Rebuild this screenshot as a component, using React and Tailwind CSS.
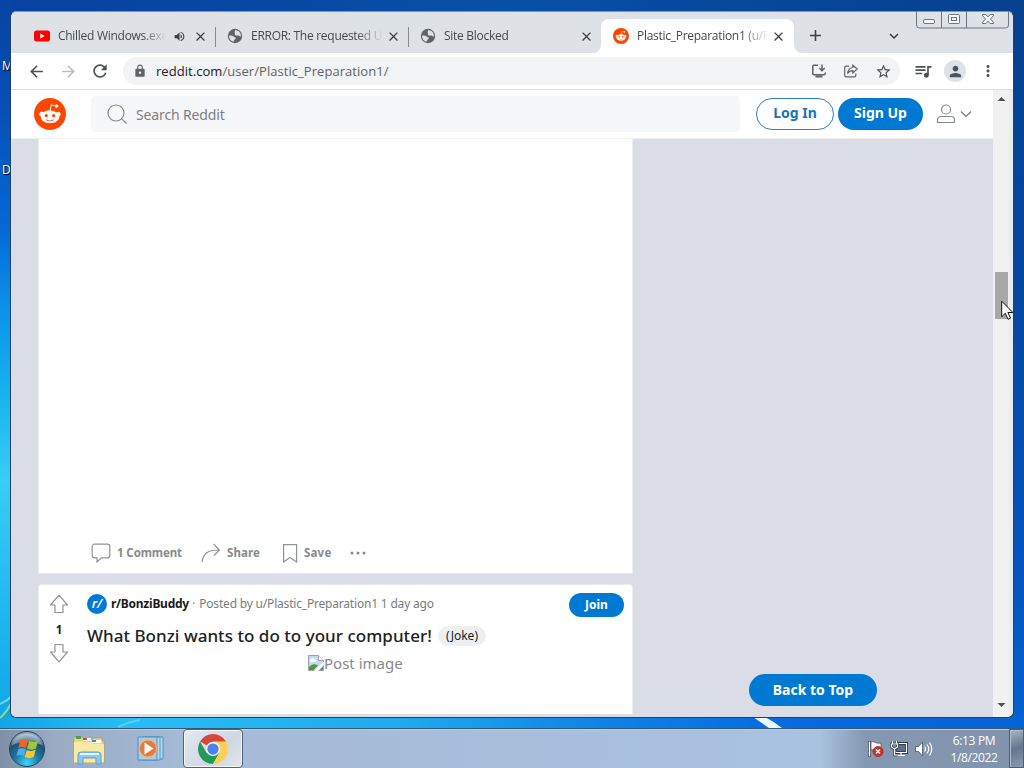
import React from 'react';
import {
  MdAdd,
  MdArrowBack,
  MdArrowForward,
  MdClose,
  MdExpandMore,
  MdLock,
  MdMoreVert,
  MdPerson,
  MdQueueMusic,
  MdRefresh,
  MdStarBorder,
  MdVolumeUp,
} from 'react-icons/md';

const tabs = [
  { title: 'Chilled Windows.exe', icon: 'youtube', audio: true, divider: true },
  { title: 'ERROR: The requested U', icon: 'globe', divider: true },
  { title: 'Site Blocked', icon: 'globe' },
  { title: 'Plastic_Preparation1 (u/P', icon: 'reddit', active: true },
];

function Snoo({ size }) {
  return (
    <svg width={size} height={size} viewBox="0 0 20 20" className="shrink-0">
      <circle cx="10" cy="10" r="10" fill="#ff4500" />
      <path
        fill="#fff"
        d="M16.67 10a1.46 1.46 0 0 0-2.47-1 7.12 7.12 0 0 0-3.85-1.23l.65-3.12 2.14.45a1 1 0 1 0 .13-.61l-2.45-.49a.31.31 0 0 0-.37.24l-.74 3.47a7.14 7.14 0 0 0-3.9 1.23 1.46 1.46 0 1 0-1.61 2.39 2.87 2.87 0 0 0 0 .44c0 2.24 2.61 4.06 5.83 4.06s5.83-1.82 5.83-4.06a2.87 2.87 0 0 0 0-.44 1.46 1.46 0 0 0 .81-1.33zm-10 1a1 1 0 1 1 2 0 1 1 0 0 1-2 0zm5.81 2.75a3.84 3.84 0 0 1-2.47.77 3.84 3.84 0 0 1-2.47-.77.27.27 0 0 1 .38-.38 3.27 3.27 0 0 0 2.09.63 3.28 3.28 0 0 0 2.09-.61.27.27 0 1 1 .39.4zm-.18-1.71a1 1 0 1 1 0-2 1 1 0 0 1 0 2z"
      />
    </svg>
  );
}

function TabIcon({ name }) {
  if (name === 'reddit') return <Snoo size={16} />;
  if (name === 'globe') {
    return (
      <svg width="16" height="16" viewBox="0 0 16 16" className="shrink-0">
        <circle cx="8" cy="8" r="7.200" fill="#5f6368" />
        <path d="M2 7.600c1.800-.3 4 .2 4.900 1.200.7.800 1.900.3 2 1.300 0 1-1.300 1-1.500 2-.1.700-.6 1.400-1.200 1.600C3.400 13 1.900 10.500 2 7.600z" fill="#dee1e6" />
        <path d="M8.500 1.900c2.500.2 4.500 1.900 5.200 4.100.2.900.2 2-.1 2.900-.8-.2-1-1.300-2-1.400-1.300-.2-2.700.4-3.500-.6-.6-.9.200-1.700-.4-2.400-.5-.7.300-1.600.8-2.600z" fill="#dee1e6" />
      </svg>
    );
  }
  return (
    <svg width="16" height="16" viewBox="0 0 16 16" className="shrink-0">
      <rect y="2.4" width="16" height="11" rx="2.500" fill="#f00" />
      <path d="M6.300 5.400v5l4.400-2.500z" fill="#fff" />
    </svg>
  );
}

function Tab({ tab }) {
  return (
    <div
      className={`relative flex h-[34px] w-[193px] shrink-0 items-center pl-3 ${
        tab.active ? 'rounded-t-lg bg-white pr-[8px]' : 'pr-[7px]'
      }`}
    >
      <TabIcon name={tab.icon} />
      <div className="ml-[8px] flex-1 overflow-hidden whitespace-nowrap text-[12px] tracking-[-0.28px] text-[#45494d] [mask-image:linear-gradient(to_right,#000_78%,transparent_98%)]">
        {tab.title}
      </div>
      {tab.audio && <MdVolumeUp size={13} className="ml-[5px] mr-[7px] shrink-0 text-[#3c4043]" />}
      <MdClose size={15} className="shrink-0 text-[#3c4043]" />
      {tab.divider && <span className="absolute -right-px top-[8px] h-[20px] w-px bg-[#85888d]" />}
      {tab.active && (
        <>
          <svg className="absolute -left-2 bottom-0" width="8" height="8">
            <path d="M8 0v8H0a8 8 0 0 0 8-8z" fill="#fff" />
          </svg>
          <svg className="absolute -right-2 bottom-0" width="8" height="8">
            <path d="M0 0v8h8a8 8 0 0 1-8-8z" fill="#fff" />
          </svg>
        </>
      )}
    </div>
  );
}

function WindowControls() {
  return (
    <svg
      className="absolute -top-px right-[3px]"
      width="94"
      height="18"
      fill="none"
      stroke="#6f757c"
    >
      <path d="M.5 0v14a3 3 0 0 0 3 3h86a3 3 0 0 0 3-3V0M25.500 0v17M50.500 0v17" />
      <rect x="7.500" y="8.500" width="11" height="4" rx="1.500" fill="#f6f7f8" />
      <rect x="32.500" y="3.500" width="11" height="9" rx="1" fill="#f6f7f8" />
      <rect x="35.500" y="6.500" width="5" height="3" />
      <path
        d="M66.500 3.500h3.500l2 2.500 2-2.500h3.500v1L74.500 8l3 3.500v1H74l-2-2.500-2 2.500h-3.500v-1l3-3.500-3-3.500z"
        fill="#f6f7f8"
      />
    </svg>
  );
}

function TabStrip() {
  return (
    <div className="flex h-[41px] items-end rounded-t-md bg-[#dee1e6] pl-[11px]">
      {tabs.map((tab) => (
        <Tab key={tab.title} tab={tab} />
      ))}
      <MdAdd size={19} className="mb-[8px] ml-[12px] text-[#3c4043]" />
      <MdExpandMore size={18} className="mb-[8px] ml-[60px] text-[#3c4043]" />
      <WindowControls />
    </div>
  );
}

function InstallIcon() {
  return (
    <svg width="16" height="16" viewBox="0 0 16 16" fill="none" stroke="#5f6368" strokeWidth="1.500">
      <path d="M7 2.200H2.800a1 1 0 0 0-1 1v7.600a1 1 0 0 0 1 1h10.400a1 1 0 0 0 1-1V9.500M11 1.500v6M8.300 5l2.700 2.700L13.700 5" />
      <path d="M4.500 13.500h7" strokeWidth="2" />
    </svg>
  );
}

function ShareOutIcon() {
  return (
    <svg width="16" height="16" viewBox="0 0 16 16" fill="none" stroke="#5f6368" strokeWidth="1.200">
      <path d="M6 3.200H3a1.300 1.300 0 0 0-1.300 1.300v8A1.300 1.300 0 0 0 3 13.800h8.500a1.300 1.300 0 0 0 1.300-1.300v-2" />
      <path d="M9.800 2.200 14.300 6l-4.500 3.900V7.700C7.500 7.700 5.800 8.500 4.500 10.500c.4-3.300 2.300-5.600 5.300-6z" />
    </svg>
  );
}

function Toolbar() {
  return (
    <div className="flex h-[37px] items-center border-b border-[#dadce0] bg-white pl-[16px] pr-[14px]">
      <MdArrowBack size={19} className="text-[#4c4f53]" />
      <MdArrowForward size={19} className="ml-[13px] text-[#b9bbbe]" />
      <MdRefresh size={20} className="ml-[12px] text-[#4c4f53]" />
      <div className="ml-[13px] flex h-[28px] w-[777px] items-center rounded-full bg-[#f1f3f4] pl-[10px] pr-[8px]">
        <MdLock size={14} className="text-[#5f6368]" />
        <div className="ml-[9px] flex-1 whitespace-nowrap pt-px text-[13px] tracking-[0.05px] text-[#5f6368]">
          <span className="text-[#202124]">reddit.com</span>/user/Plastic_Preparation1/
        </div>
        <div className="flex items-center gap-4">
          <InstallIcon />
          <ShareOutIcon />
          <MdStarBorder size={17} className="text-[#4c4f53]" />
        </div>
      </div>
      <MdQueueMusic size={20} className="ml-[13px] text-[#4c4f53]" />
      <div className="ml-[11px] flex size-[22px] items-center justify-center rounded-full bg-[#dee1e6]">
        <MdPerson size={17} className="text-[#4a5162]" />
      </div>
      <MdMoreVert size={18} className="ml-[13px] shrink-0 text-[#4c4f53]" />
    </div>
  );
}

function RedditHeader() {
  return (
    <div className="flex h-[49px] items-center border-b border-[#edeff1] bg-white pl-[23px]">
      <Snoo size={32} />
      <div className="ml-[25px] flex h-[36px] w-[649px] items-center rounded-sm bg-[#f6f7f8] pl-[16px]">
        <svg width="20" height="20" fill="none" stroke="#878a8c" strokeWidth="1.200">
          <circle cx="9" cy="9" r="8" />
          <path d="m14.800 14.800 4.700 4.700" />
        </svg>
        <span className="ml-[9px] font-['Noto_Sans',sans-serif] text-[14px] tracking-[-0.14px] text-[#7d8083]">
          Search Reddit
        </span>
      </div>
      <button className="ml-[16px] h-[32px] w-[78px] rounded-full border border-[#2c7fc0] pb-[3px] font-['Noto_Sans',sans-serif] text-[14px] font-bold text-[#1872bd]">
        Log In
      </button>
      <button className="ml-[4px] h-[32px] w-[85px] rounded-full bg-[#0079d3] pb-[3px] font-['Noto_Sans',sans-serif] text-[14px] font-bold text-white">
        Sign Up
      </button>
      <svg width="20" height="20" className="ml-[13px]" fill="none" stroke="#878a8c" strokeWidth="1.200">
        <circle cx="10" cy="5.500" r="4.500" />
        <path d="M1.500 18.500v-2.500c0-2 1.500-3.500 3.500-3.500h10c2 0 3.500 1.500 3.500 3.500v2.500z" />
      </svg>
      <svg width="12" height="8" className="ml-[4px]" fill="none" stroke="#717579" strokeWidth="1.200">
        <path d="m1 1.500 5 5 5-5" />
      </svg>
    </div>
  );
}

function VoteArrow({ down }) {
  return (
    <svg width="20" height="20" className={down ? 'rotate-180' : ''} fill="none" stroke="#919496" strokeWidth="1.200">
      <path d="M10 1.200 1.500 11H6v7.500h8V11h4.500z" strokeLinejoin="round" />
    </svg>
  );
}

function PostActions() {
  return (
    <div className="flex h-[40px] items-center pl-[52px] text-[11.5px] font-bold text-[#878a8c]">
      <svg width="20" height="20" fill="none" stroke="#919496" strokeWidth="1.200">
        <path d="M3.500 1.200h13a2.300 2.300 0 0 1 2.300 2.300v9a2.300 2.300 0 0 1-2.300 2.300h-6L6 19v-4.200H3.500a2.300 2.300 0 0 1-2.300-2.300v-9a2.300 2.300 0 0 1 2.300-2.300z" />
      </svg>
      <span className="ml-[6px] w-[66px] whitespace-nowrap tracking-[-0.1px]">1 Comment</span>
      <svg width="20" height="20" className="ml-[18px]" fill="none" stroke="#919496" strokeWidth="1.200">
        <path d="M1 19c1-7.500 4.500-12 17-12M12.500 1l6 6-5.500 5.500" />
      </svg>
      <span className="ml-[6px] w-[34px] whitespace-nowrap tracking-[0.1px]">Share</span>
      <svg width="16" height="20" className="ml-[21px]" fill="none" stroke="#919496" strokeWidth="1.200">
        <path d="M1.600 1.600h13V19L8 14.500 1.600 19z" />
      </svg>
      <span className="ml-[6px] w-[28px] whitespace-nowrap tracking-[0.2px]">Save</span>
      <svg width="16" height="4" className="ml-[18px]" fill="#878a8c">
        <circle cx="2" cy="2" r="1.500" />
        <circle cx="8" cy="2" r="1.500" />
        <circle cx="14" cy="2" r="1.500" />
      </svg>
    </div>
  );
}

function BrokenImage() {
  return (
    <svg width="16" height="16" className="shrink-0">
      <path d="M.5.500h10l5 5v10H.5z" fill="#c7d9f2" stroke="#9aa1a8" />
      <path d="M10.500.500v5h5" fill="#fff" stroke="#9aa1a8" />
      <path d="M3 7a1.500 1.500 0 0 1 .3-2.900 2 2 0 0 1 3.700.4A1.300 1.300 0 0 1 7.500 7z" fill="#fff" />
      <path d="M1 15v-3c3-3.500 6-3.500 9-1.500L5.500 15z" fill="#4c9c3c" />
      <path d="M6 15.900 15.900 6.500V10L10 15.900z" fill="#fff" />
      <path d="m11.500 15 3.500-3.500V15z" fill="#4c9c3c" />
    </svg>
  );
}

function BonziPost() {
  return (
    <div className="flex h-[130px] w-[595px] rounded-t-sm border border-b-0 border-[#e9ebef] bg-white">
      <div className="flex w-[40px] flex-col items-center pt-[9px]">
        <VoteArrow />
        <span className="my-[7px] h-[15px] pt-px text-[11.5px] font-bold leading-[15px] text-[#1c1c1c]">1</span>
        <VoteArrow down />
      </div>
      <div className="flex-1 pl-[8px] pr-[8px] pt-[7px]">
        <div className="flex h-[24px] items-center whitespace-nowrap text-[12px]">
          <div className="flex size-[20px] shrink-0 items-center justify-center rounded-full bg-[#0079d3] text-[13px] font-semibold italic text-white">
            r/
          </div>
          <span className="ml-[4px] w-[78px] pb-px font-bold tracking-[-0.25px] text-[#1c1c1c]">r/BonziBuddy</span>
          <span className="ml-[3px] text-[#787c7e]">·</span>
          <span className="ml-[4px] flex-1 pb-px tracking-[-0.19px] text-[#787c7e]">
            Posted by u/Plastic_Preparation1 1 day ago
          </span>
          <button className="mt-[2px] h-[24px] w-[55px] rounded-full bg-[#0079d3] font-['Noto_Sans',sans-serif] text-[12px] font-bold text-white">
            Join
          </button>
        </div>
        <div className="mt-[9px] flex h-[22px] items-center">
          <h3 className="w-[345px] whitespace-nowrap text-[17px] font-medium tracking-[0.03px] text-[#222]">
            What Bonzi wants to do to your computer!
          </h3>
          <span className="ml-[6px] flex h-[20px] w-[48px] items-center justify-center rounded-full bg-[#edeff1] text-[12px] text-[#1c1c1c]">
            (Joke)
          </span>
        </div>
        <div className="mt-[4px] flex h-[24px] items-center pl-[221px] text-[15px] text-[#878a8c]">
          <BrokenImage />
          <span className="whitespace-nowrap">Post image</span>
        </div>
      </div>
    </div>
  );
}

function Scrollbar() {
  return (
    <div className="flex w-[16px] flex-col items-center bg-[#f1f1f1]">
      <svg width="9" height="5" className="mt-[6px]">
        <path d="M.5 5h8l-4-4z" fill="#505050" />
      </svg>
      <div className="mt-[171px] h-[47px] w-[13px] bg-[#a8a8a8]" />
      <svg width="9" height="5" className="mb-[9px] mt-auto">
        <path d="M.5 0h8l-4 4z" fill="#505050" />
      </svg>
    </div>
  );
}

function BrowserWindow() {
  return (
    <div className="absolute left-[10px] top-[11px] flex h-[707px] w-[1004px] flex-col rounded-md border border-[#24425f] border-t-[#7c97b5] bg-[#e8ebf0]">
      <TabStrip />
      <Toolbar />
      <div className="mr-[4px] flex min-h-0 flex-1 rounded-b-md">
        <div className="flex flex-1 flex-col">
          <RedditHeader />
          <div className="flex flex-1 rounded-bl-md bg-[#dadde5] pl-[27px] font-['Noto_Sans',sans-serif]">
            <div className="flex flex-col justify-between pb-[3px]">
              <div className="flex h-[435px] w-[595px] flex-col justify-end border border-t-0 border-[#e9ebef] bg-white">
                <PostActions />
              </div>
              <BonziPost />
            </div>
            <div className="flex flex-1 items-end pb-[11px] pl-[116px]">
              <button className="h-[32px] w-[128px] rounded-full bg-[#0079d3] pb-[2px] text-[14px] font-bold text-white">
                Back to Top
              </button>
            </div>
          </div>
        </div>
        <Scrollbar />
      </div>
    </div>
  );
}

function StartOrb() {
  return (
    <svg width="38" height="38" viewBox="0 0 38 38">
      <defs>
        <radialGradient id="orb" cx="50%" cy="90%" r="80%">
          <stop offset="0" stopColor="#3fd6f5" />
          <stop offset=".45" stopColor="#1b78a8" />
          <stop offset=".8" stopColor="#24506f" />
          <stop offset="1" stopColor="#8aa5b9" />
        </radialGradient>
      </defs>
      <circle cx="19" cy="19" r="17.500" fill="url(#orb)" stroke="#23445f" />
      <path d="M4 15a15.500 15.500 0 0 1 30 0c-9-4-20-4-30 0z" fill="#fff" opacity=".3" />
      <path d="M12.500 10c3-1.500 5-1 7.500.3L18 18c-2.500-1.300-5-1.500-7.500-.3z" fill="#f2652a" />
      <path d="M21 11c3 1.500 6 1.500 9-.5L28 18.500c-3 1.500-6 1.500-9 0z" fill="#9cc93c" />
      <path d="M10.300 19c2.700-1.200 5-1 7.500.3L16 26c-2.500-1.300-5-1.300-7.500-.3z" fill="#4aaeea" />
      <path d="M18.700 20c3 1.300 6 1.300 9-.2L25.700 27c-3 1.500-6 1.400-9 .1z" fill="#fdc52e" />
    </svg>
  );
}

function ExplorerIcon() {
  return (
    <svg width="34" height="30" viewBox="0 0 34 30">
      <path d="M2 3.500V2h9v2h10V3h9v3h2v21.500H2z" fill="#edd67e" stroke="#b59a4b" strokeWidth=".7" />
      <path d="M4 1h5v3H4z" fill="#47a34a" />
      <path d="M11 3h8v3h-8z" fill="#f5f5ef" />
      <path d="M11 3h4v2h-4z" fill="#d9542f" />
      <path d="M20 5h9v3h-9z" fill="#fff" />
      <path d="M20 5h4v2h-4z" fill="#4388c9" />
      <path d="M2 7h17l2 2h11v18.500H2z" fill="#f9e9a5" />
      <path d="M6 29V20q0-3 3-3h17q3 0 3 3v9h-5v-6H11v6z" fill="#8bcbea" stroke="#5a9fc9" />
      <path d="M8 19h19" stroke="#e4f6ff" strokeWidth="2" />
    </svg>
  );
}

function MediaPlayerIcon() {
  return (
    <svg width="28" height="28" viewBox="0 0 28 28">
      <path d="M8 2h18v22H8z" fill="#b8def0" stroke="#4a92bd" />
      <path d="M5 2h18v23H5z" fill="#b8def0" stroke="#4a92bd" />
      <path d="M1 2h19v23H1z" fill="#b0cade" stroke="#4a92bd" />
      <circle cx="11" cy="13.500" r="8.500" fill="#ea7a33" stroke="#f6b07a" />
      <path d="M7.500 7.500v12l9-6z" fill="#fff" />
    </svg>
  );
}

function ChromeIcon() {
  return (
    <svg width="30" height="30" viewBox="0 0 48 48">
      <path d="M24 24 3.220 12A24 24 0 0 1 44.780 12z" fill="#d5493d" />
      <path d="M13.600 30 3.220 12A24 24 0 0 0 24 48l10.400-18z" fill="#219a58" />
      <path d="M24 12h20.780A24 24 0 0 1 24 48l10.400-18z" fill="#ffd04f" />
      <circle cx="24" cy="24" r="11.500" fill="#f1f1f1" />
      <circle cx="24" cy="24" r="9" fill="#4a82ea" />
    </svg>
  );
}

function TrayIcons() {
  return (
    <svg width="66" height="18" fill="none" stroke="#fff" strokeWidth="1.200">
      <path d="M2.500 1v16" stroke="#2e3a4a" strokeWidth="3" />
      <path d="M2.500 1.500v15" strokeWidth="1.500" />
      <path d="M4 2c4-1 4 2 10 1v8c-5 1-6-2-10-1z" fill="#fff" stroke="#3d4959" strokeWidth=".7" />
      <circle cx="11" cy="11.500" r="5" fill="#d62e26" stroke="#a91d18" strokeWidth=".8" />
      <path d="m9 9.500 4 4m0-4-4 4" strokeWidth="1.500" />
      <path d="M30.500 3.500h9v9h-11v-4" fill="#59708a" stroke="#2e3a4a" strokeWidth="3" />
      <path d="M31 3.500h8.500v9h-11v-4M34 12.500v3m-4 0h8" />
      <path d="M25.500 1v3m4-3v3m-5 0h6v3l-2 1.500h-2l-2-1.500zm3 4v7h3" stroke="#2e3a4a" strokeWidth="2.500" />
      <path d="M25.500 1v3m4-3v3m-5 0h6v3l-2 1.500h-2l-2-1.500zm3 4v7h3" />
      <path d="M48.500 6.500h3l4-4.500v14l-4-4.500h-3z" fill="#fff" stroke="#465365" strokeWidth=".8" />
      <path d="M57.500 6.500q2 2.500 0 5M60 4.500q3.500 4.500 0 9M62.500 2.500q4.500 6.500 0 13" />
    </svg>
  );
}

function Taskbar() {
  return (
    <div className="absolute bottom-0 left-0 flex h-[40px] w-full items-center border-t border-[#365873] bg-[linear-gradient(90deg,#7e8fa7_0,#9aabc3_55px,#a5bbd8_190px,#a9c2df_820px,#8598b1_865px,#8293ac_100%)] shadow-[inset_0_1px_0_#bccbdd]">
      <div className="ml-[8px]">
        <StartOrb />
      </div>
      <div className="ml-[26px] pt-[2px]">
        <ExplorerIcon />
      </div>
      <div className="ml-[31px]">
        <MediaPlayerIcon />
      </div>
      <div className="ml-[18px] flex h-[39px] w-[60px] items-center justify-center rounded-sm border border-[#4f6277] bg-[linear-gradient(135deg,#e4e9f1,#cfd7e3_60%,#e2e6ed)] shadow-[inset_0_0_0_1px_#f4f6f9]">
        <ChromeIcon />
      </div>
      <div className="ml-auto flex h-full items-center">
        <TrayIcons />
        <div className="ml-[15px] w-[52px] text-center text-[12px] leading-[17px] tracking-[-0.35px] text-white">
          <div>6:13 PM</div>
          <div>1/8/2022</div>
        </div>
        <div className="ml-[9px] h-full w-[15px] border border-[#4d5f75] bg-[linear-gradient(160deg,#a9b7c9,#64768d_50%,#8b9bb0)] shadow-[inset_1px_1px_0_#aebccd]" />
      </div>
    </div>
  );
}

function Cursor() {
  return (
    <svg className="absolute left-[1001px] top-[300px]" width="13" height="21">
      <path d="M.7 1.200v15.600l3.600-3.500 2.700 6 2.500-1.100-2.600-5.700h5z" fill="#fff" stroke="#111" />
    </svg>
  );
}

export default function App() {
  return (
    <div className="relative h-[768px] w-[1024px] overflow-hidden bg-[linear-gradient(90deg,#0742a0,#0750a8_50%,#06408e)] font-['Open_Sans','Noto_Sans',sans-serif]">
      {/* wallpaper strips that stay visible round the window */}
      <div className="absolute left-0 top-0 h-[728px] w-[12px] bg-[linear-gradient(180deg,#0844a2_0,#0650b8_110px,#0669d6_230px,#0b93e9_310px,#18b5ee_400px,#38cdf5_480px,#22b9f1_600px,#0ea4e8_100%)]" />
      <div className="absolute right-0 top-0 h-[728px] w-[12px] bg-[linear-gradient(180deg,#06408e_0,#0548a0_300px,#0653bd_550px,#0560d0_100%)]" />
      <div className="absolute left-0 top-[717px] h-[12px] w-full bg-[linear-gradient(90deg,#10a6e8_0,#27bdf5_130px,#20aaf0_400px,#0d80e5_620px,#0669e0_800px,#0563d5_100%)]" />
      <svg className="absolute left-0 top-[660px]" width="800" height="68" fill="none">
        <path d="M0 44q7-3 12-8" stroke="#a8e6f8" strokeWidth="2" opacity=".7" />
        <path d="M0 58q6-5 12-16" stroke="#b7e36a" strokeWidth="2" opacity=".8" />
        <path d="M118 67q10-5 22-7" stroke="#7ddafa" strokeWidth="2" opacity=".6" />
        <path d="M753 57h12q8 4 17 11h-13z" fill="#e9f7ff" />
      </svg>
      <span className="absolute left-[2px] top-[58px] text-[12px] leading-4 text-white [text-shadow:1px_1px_1px_#000]">M</span>
      <span className="absolute left-[2px] top-[162px] text-[12px] leading-4 text-white [text-shadow:1px_1px_1px_#000]">D</span>
      <BrowserWindow />
      <Taskbar />
      <Cursor />
    </div>
  );
}
